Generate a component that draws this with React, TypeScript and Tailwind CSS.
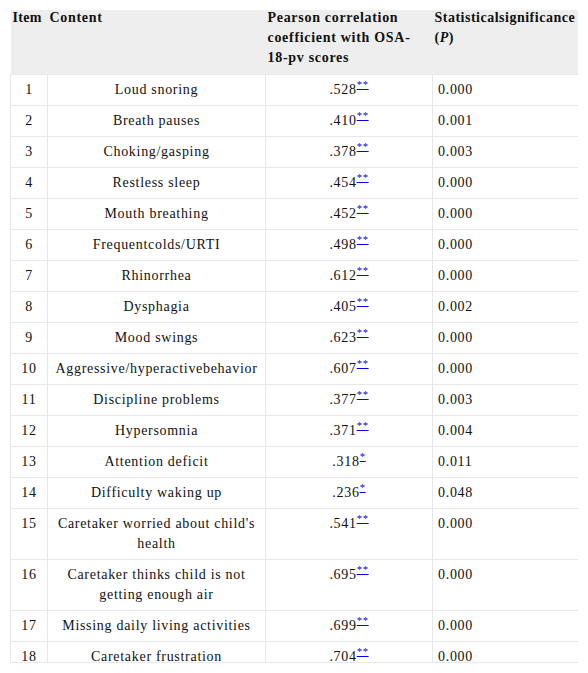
import React from 'react'

type Row = {
  item: number
  content: React.ReactNode
  r: string
  stars: '*' | '**'
  p: string
}

const rows: Row[] = [
  { item: 1, content: 'Loud snoring', r: '.528', stars: '**', p: '0.000' },
  { item: 2, content: 'Breath pauses', r: '.410', stars: '**', p: '0.001' },
  { item: 3, content: 'Choking/gasping', r: '.378', stars: '**', p: '0.003' },
  { item: 4, content: 'Restless sleep', r: '.454', stars: '**', p: '0.000' },
  { item: 5, content: 'Mouth breathing', r: '.452', stars: '**', p: '0.000' },
  { item: 6, content: 'Frequentcolds/URTI', r: '.498', stars: '**', p: '0.000' },
  { item: 7, content: 'Rhinorrhea', r: '.612', stars: '**', p: '0.000' },
  { item: 8, content: 'Dysphagia', r: '.405', stars: '**', p: '0.002' },
  { item: 9, content: 'Mood swings', r: '.623', stars: '**', p: '0.000' },
  { item: 10, content: 'Aggressive/hyperactivebehavior', r: '.607', stars: '**', p: '0.000' },
  { item: 11, content: 'Discipline problems', r: '.377', stars: '**', p: '0.003' },
  { item: 12, content: 'Hypersomnia', r: '.371', stars: '**', p: '0.004' },
  { item: 13, content: 'Attention deficit', r: '.318', stars: '*', p: '0.011' },
  { item: 14, content: 'Difficulty waking up', r: '.236', stars: '*', p: '0.048' },
  {
    item: 15,
    content: (
      <>
        Caretaker worried about child's
        <br />
        health
      </>
    ),
    r: '.541',
    stars: '**',
    p: '0.000',
  },
  {
    item: 16,
    content: (
      <>
        Caretaker thinks child is not
        <br />
        getting enough air
      </>
    ),
    r: '.695',
    stars: '**',
    p: '0.000',
  },
  { item: 17, content: 'Missing daily living activities', r: '.699', stars: '**', p: '0.000' },
  { item: 18, content: 'Caretaker frustration', r: '.704', stars: '**', p: '0.000' },
]

const cell = 'border border-[#e8e8e8] px-[5px] py-[5px] align-top'
// header band: thin white strip on top so the first text line sits a little above the grey
const head =
  'px-[2px] py-0 text-left align-top bg-[linear-gradient(to_bottom,#ffffff_2px,#eeeeee_2px)]'

export default function App() {
  return (
    <div className="min-h-[673px] bg-white pl-[10px] pt-[8px] font-[family-name:'Liberation_Serif','Times_New_Roman',serif] text-[14px] leading-[20px] tracking-[0.7px] text-[#111]">
      <div className="h-[655px] w-[568px] overflow-hidden border-b border-[#e8e8e8]">
        <table className="w-[568px] table-fixed border-collapse">
          <colgroup>
            <col className="w-[37px]" />
            <col className="w-[218px]" />
            <col className="w-[167px]" />
            <col className="w-[146px]" />
          </colgroup>
          <thead>
            <tr className="font-bold">
              <th className={`${head} h-[66px] tracking-[0.3px]`}>Item</th>
              <th className={head}>Content</th>
              <th className={head}>
                Pearson correlation
                <br />
                coefficient with OSA-
                <br />
                18-pv scores
              </th>
              <th className={`${head} whitespace-nowrap tracking-[0.5px]`}>
                Statisticalsignificance
                <br />(<i>P</i>)
              </th>
            </tr>
          </thead>
          <tbody>
            {rows.map((row) => (
              <tr key={row.item}>
                <td className={`${cell} text-center`}>{row.item}</td>
                <td className={`${cell} text-center`}>{row.content}</td>
                <td className={`${cell} text-center`}>
                  {row.r}
                  <sup>
                    <a href="#" className="text-[#0000ee] underline">
                      {row.stars}
                    </a>
                  </sup>
                </td>
                <td className={`${cell} text-left`}>{row.p}</td>
              </tr>
            ))}
          </tbody>
        </table>
      </div>
    </div>
  )
}
